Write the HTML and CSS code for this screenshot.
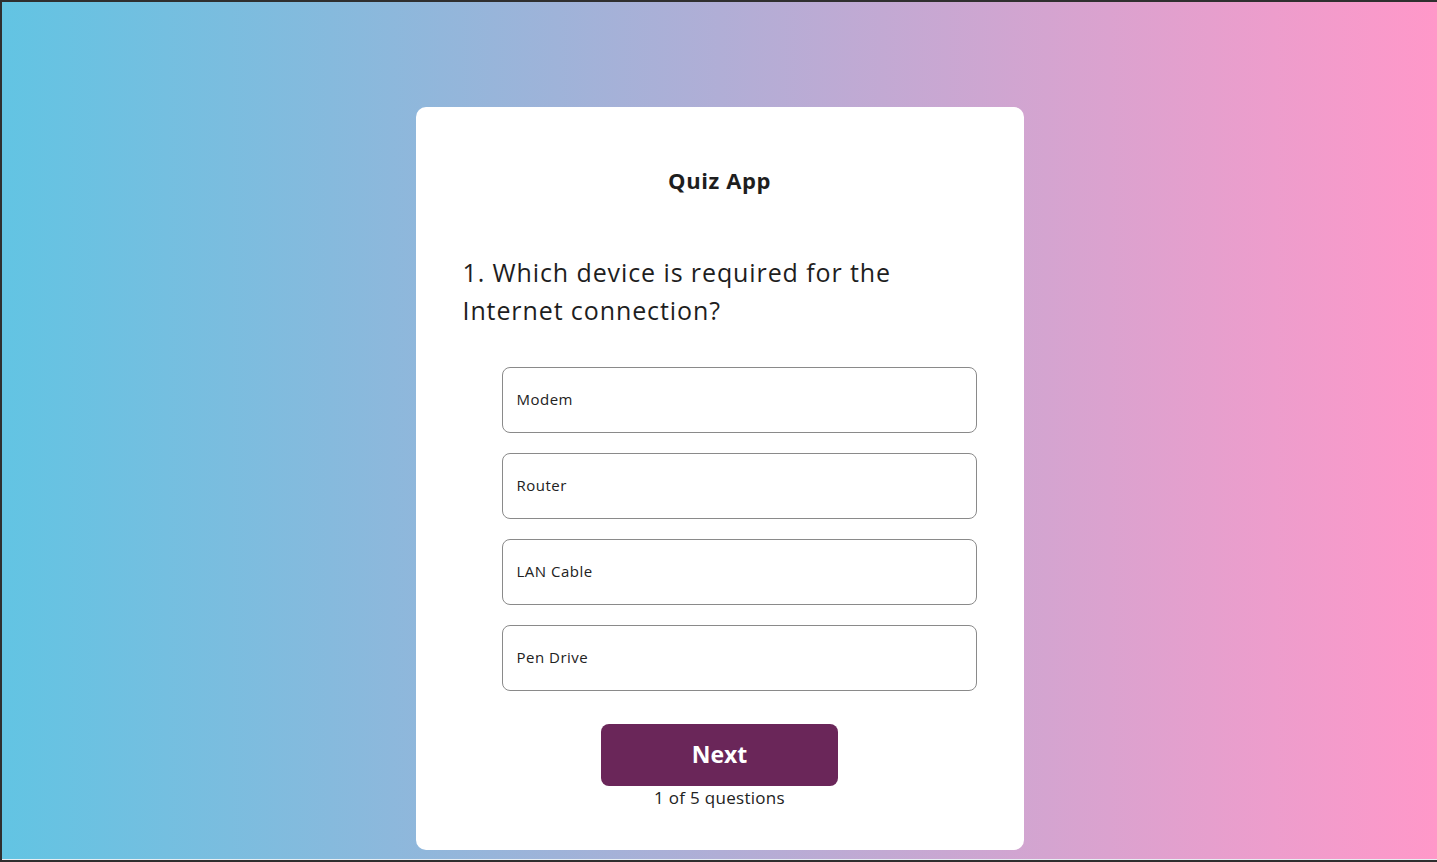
FILE: index.html
```html
<!DOCTYPE html>
<html lang="en">
<head>
<meta charset="utf-8">
<title>Quiz App</title>
<link rel="stylesheet" href="styles.css">
</head>
<body>
<div class="frame">
  <main class="page">
    <section class="card">
      <h1 class="title">Quiz App</h1>
      <h2 class="question">1. Which device is required for the Internet connection?</h2>
      <ul class="options">
        <li class="option">Modem</li>
        <li class="option">Router</li>
        <li class="option">LAN Cable</li>
        <li class="option">Pen Drive</li>
      </ul>
      <div class="footer">
        <button class="next">Next</button>
        <p class="count">1 of 5 questions</p>
      </div>
    </section>
  </main>
</div>
</body>
</html>
```
FILE: styles.css
```css
* { box-sizing: border-box; }
html, body { margin: 0; padding: 0; height: 100%; }
body {
  font-family: "Open Sans", "Noto Sans", sans-serif;
  background: #2f2f2f;
  color: #222;
}
.frame {
  height: 862px;
  padding: 2px 0 2px 2px;
}
.page {
  height: 100%;
  background: linear-gradient(to right, #62c4e3, #ff98c9);
  border-bottom: 1px solid #e8eef3;
  display: flex;
  justify-content: center;
  padding-top: 105px;
}
.card {
  width: 608px;
  height: 743px;
  background: #fff;
  border-radius: 10px;
  padding: 55px 47px 0 47px;
}
.title {
  margin: 0;
  text-align: center;
  font-size: 22px;
  font-weight: 700;
  line-height: 36px;
  letter-spacing: 0.6px;
  color: #1e1e1e;
}
.question {
  margin: 55px 0 0;
  font-size: 25px;
  font-weight: 400;
  line-height: 38px;
  letter-spacing: 0.9px;
  color: #1e1e1e;
}
.options {
  list-style: none;
  margin: 38px 0 0;
  padding: 0 0 0 39px;
  display: flex;
  flex-direction: column;
  gap: 20px;
}
.option {
  height: 66px;
  border: 1px solid #8a8a8a;
  border-radius: 8px;
  display: flex;
  align-items: center;
  padding: 0 14px 2px;
  font-size: 15px;
  letter-spacing: 0.5px;
  color: #222;
}
.footer {
  display: flex;
  flex-direction: column;
  align-items: center;
  margin-top: 33px;
}
.next {
  width: 237px;
  height: 62px;
  border: none;
  border-radius: 8px;
  background: #6a2659;
  color: #fff;
  font-family: inherit;
  font-size: 23px;
  font-weight: 700;
  padding: 0 0 2px;
}
.count {
  margin: 0;
  font-size: 17px;
  line-height: 24px;
  letter-spacing: 0.3px;
  color: #222;
}
```
